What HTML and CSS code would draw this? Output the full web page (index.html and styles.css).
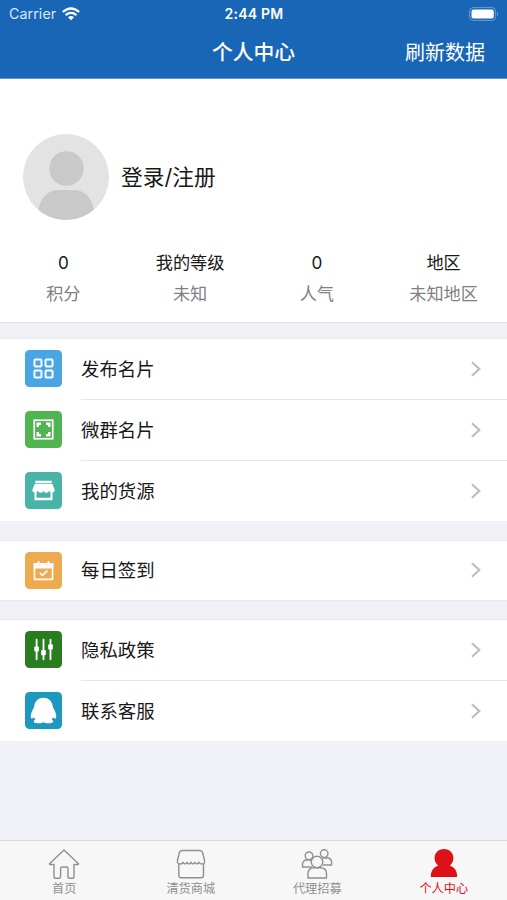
FILE: index.html
```html
<!DOCTYPE html>
<html lang="zh-CN">
<head>
<meta charset="utf-8">
<title>个人中心</title>
<link rel="stylesheet" href="styles.css">
</head>
<body>
<div class="screen">
  <header class="header">
    <div class="status">
      <div class="carrier"><span>Carrier</span>
        <svg width="18" height="14" viewBox="0 0 18 14" fill="none" stroke="#fff" stroke-width="2.3"><path d="M.8 5Q9-2 17.2 5M3.6 8.1Q9 3.7 14.4 8.1"/><path d="M6 10.2Q9 8 12 10.2L9 13.3Z" fill="#fff" stroke="none"/></svg>
      </div>
      <div class="time">2:44 PM</div>
      <div class="battery">
        <svg width="31" height="14" viewBox="0 0 31 14"><rect x=".6" y=".6" width="26" height="12.8" rx="3.6" fill="none" stroke="#6d9dd2"/><rect x="2.5" y="2.5" width="22.3" height="9" rx="2" fill="#fff"/><path d="M28 4.8Q30.3 7 28 9.2Z" fill="#6d9dd2"/></svg>
      </div>
    </div>
    <div class="navbar"><span></span><h1>个人中心</h1><span class="refresh">刷新数据</span></div>
  </header>
  <section class="profile">
    <div class="user">
      <svg class="avatar" width="86" height="86" viewBox="0 0 86 86"><defs><clipPath id="round"><circle cx="43" cy="43" r="43"/></clipPath></defs><g clip-path="url(#round)"><rect width="86" height="86" fill="#e3e3e3"/><circle cx="43.5" cy="34.5" r="17.3" fill="#c9c9c9"/><path d="M12 86L15.5 75Q20 56 36 56H51Q66 56 71 75L74 86Z" fill="#c9c9c9"/></g></svg>
      <span class="login">登录/注册</span>
    </div>
    <div class="stats">
      <div><b>0</b><span>积分</span></div>
      <div><b>我的等级</b><span>未知</span></div>
      <div><b>0</b><span>人气</span></div>
      <div><b>地区</b><span>未知地区</span></div>
    </div>
  </section>
  <section class="group first">
    <div class="row"><svg class="icon blue" viewBox="0 0 36 36"><g fill="none" stroke="#fff" stroke-width="1.9"><rect x="9.2" y="9.2" width="6.8" height="6.8" rx=".8"/><rect x="20" y="9.2" width="6.8" height="6.8" rx=".8"/><rect x="9.2" y="20" width="6.8" height="6.8" rx=".8"/><rect x="20" y="20" width="6.8" height="6.8" rx=".8"/></g></svg><div class="cell"><span>发布名片</span><svg class="chevron" viewBox="0 0 10 16"><path d="M1 1.2L8.3 8L1 14.8"/></svg></div></div>
    <div class="row"><svg class="icon green" viewBox="0 0 36 36"><rect x="9" y="9" width="18" height="18" fill="none" stroke="#fff" stroke-width="1.6"/><path d="M11.2 11.2H15.6V13.6H13.6V15.6H11.2ZM24.8 11.2H20.4V13.6H22.4V15.6H24.8ZM11.2 24.8H15.6V22.4H13.6V20.4H11.2ZM24.8 24.8H20.4V22.4H22.4V20.4H24.8Z" fill="#fff"/></svg><div class="cell"><span>微群名片</span><svg class="chevron" viewBox="0 0 10 16"><path d="M1 1.2L8.3 8L1 14.8"/></svg></div></div>
    <div class="row"><svg class="icon teal" viewBox="0 0 36 36"><path d="M10 8.5H26V10.7H10ZM9.5 11.5H26.5L28.8 17A2.6 2.6 0 0 1 23.4 17.5A2.7 2.7 0 0 1 18 17.5A2.7 2.7 0 0 1 12.6 17.5A2.6 2.6 0 0 1 7.2 17Z" fill="#fff"/><path d="M10.2 19V26.6H25.8V19M10.2 26H25.8" fill="none" stroke="#fff" stroke-width="2"/></svg><div class="cell"><span>我的货源</span><svg class="chevron" viewBox="0 0 10 16"><path d="M1 1.2L8.3 8L1 14.8"/></svg></div></div>
  </section>
  <section class="group single">
    <div class="row"><svg class="icon orange" viewBox="0 0 36 36"><path d="M9.2 11.5H26.8V26.6H9.2Z" fill="none" stroke="#fff" stroke-width="1.6" stroke-linejoin="round"/><path d="M8.5 10.8H11.8L13.2 13H14.8L16 11.2H20L21.2 13H22.8L24.2 10.8H27.5V16H8.5Z" fill="#fff"/><path d="M13.2 8.8V11.8M22.8 8.8V11.8M14.4 20.4L17 22.8L21.8 18.2" fill="none" stroke="#fff" stroke-width="1.6"/></svg><div class="cell"><span>每日签到</span><svg class="chevron" viewBox="0 0 10 16"><path d="M1 1.2L8.3 8L1 14.8"/></svg></div></div>
  </section>
  <section class="group last">
    <div class="row"><svg class="icon forest" viewBox="0 0 36 36"><path d="M11.3 8.5V27.5M18 8.5V27.5M24.8 8.5V27.5" stroke="#fff" stroke-width="1.8" stroke-linecap="round"/><g fill="#fff"><rect x="9" y="15" width="4.6" height="5" rx="1"/><rect x="15.7" y="18.5" width="4.6" height="5" rx="1"/><rect x="22.5" y="13" width="4.6" height="5" rx="1"/></g></svg><div class="cell"><span>隐私政策</span><svg class="chevron" viewBox="0 0 10 16"><path d="M1 1.2L8.3 8L1 14.8"/></svg></div></div>
    <div class="row"><svg class="icon cyan" viewBox="0 0 36 36"><path d="M18 5.5C12.2 5.5 9 9.8 8.8 15.2C6.6 18.5 5.2 22 5.7 25C6.2 26.4 7.6 25.8 8.8 24.8L10 26.8C8 27.8 8 29.8 10.5 30.2C13 30.7 16.2 30.4 17.2 29.6H18.8C19.8 30.4 23 30.7 25.5 30.2C28 29.8 28 27.8 26 26.8L27.2 24.8C28.4 25.8 29.8 26.4 30.3 25C30.8 22 29.4 18.5 27.2 15.2C27 9.8 23.8 5.5 18 5.5Z" fill="#fff"/></svg><div class="cell"><span>联系客服</span><svg class="chevron" viewBox="0 0 10 16"><path d="M1 1.2L8.3 8L1 14.8"/></svg></div></div>
  </section>
  <nav class="tabs">
    <div class="tab"><svg viewBox="0 0 32 32"><path d="M16 2L30.2 15.5Q31 16.5 29.5 16.5H26V28.5Q26 30.3 24.2 30.3H21.5Q20 30.3 20 28.5V20.5Q20 19 18.5 19H14Q12.6 19 12.6 20.5V28.5Q12.6 30.3 11 30.3H8Q6 30.3 6 28.5V16.5H2.5Q1 16.5 1.8 15.5Z"/></svg><span>首页</span></div>
    <div class="tab"><svg viewBox="0 0 32 32"><path d="M7 2.5H25Q27 2.5 27.6 4.5L29.6 12.5Q30 16 27 16Q24.5 16 23.7 14.3Q22 17.5 19.8 14.3Q17.8 17.5 16 14.3Q14 17.5 12 14.3Q10 17.5 8.2 14.3Q7.3 16 5 16Q2 16 2.4 12.5L4.4 4.5Q5 2.5 7 2.5ZM3.8 16V27.5Q3.8 29.8 6 29.8H26.3Q28.5 29.8 28.5 27.5V15.5"/></svg><span>清货商城</span></div>
    <div class="tab"><svg viewBox="0 0 32 32"><circle cx="16" cy="14" r="5.8"/><path d="M7 30V26Q7 19.8 13 19.8H19.5Q25.5 19.8 25.5 26V30Z"/><circle cx="8" cy="7.8" r="3.8"/><circle cx="23.2" cy="5.6" r="3.8"/><path d="M11 19H1.5V16.5Q1.5 12 6 12H10M21.5 10H26Q30.6 10 30.6 14.5V17H22"/></svg><span>代理招募</span></div>
    <div class="tab active"><svg viewBox="0 0 32 32"><path d="M16 1C10.2 1 6.6 5 6.6 10C6.6 13.5 8.2 16.1 10.3 17.7C6 19 2.8 22 2.8 29H29.2C29.2 22 26 19 21.7 17.7C23.8 16.1 25.4 13.5 25.4 10C25.4 5 21.8 1 16 1Z"/></svg><span>个人中心</span></div>
  </nav>
</div>
</body>
</html>
```
FILE: styles.css
```css
* { box-sizing: border-box; }
body { margin: 0; font-family: Inter, "Noto Sans CJK SC", sans-serif; color: #181818; }
.screen { width: 507px; height: 900px; display: flex; flex-direction: column; background: #f0f1f6; overflow: hidden; }
.header { height: 79px; flex: none; background: #1966b7; color: #fff; border-bottom: 1px solid #5c9ad8; }
.status { height: 27px; padding: 0 7px 0 9px; display: grid; grid-template-columns: 1fr auto 1fr; align-items: center; }
.carrier { display: flex; align-items: center; gap: 6px; font-size: 14.2px; color: #dce9f7; letter-spacing: .1px; }
.time { margin-right: 1px; font-size: 14px; font-weight: 600; letter-spacing: .25px; }
.battery { justify-self: end; display: flex; }
.navbar { height: 51px; padding-right: 22px; display: grid; grid-template-columns: 1fr auto 1fr; align-items: center; }
.navbar h1 { margin: 0 0 0 22px; font-size: 20.8px; line-height: 30px; font-weight: 500; }
.refresh { justify-self: end; margin-top: 1px; font-size: 20px; line-height: 30px; }
.profile { height: 244px; flex: none; padding-top: 55px; background: #fff; border-bottom: 1px solid #e3e4e6; }
.user { height: 86px; padding-left: 23px; display: flex; align-items: center; gap: 12px; }
.login { font-size: 21.7px; line-height: 30px; }
.stats { margin-top: 28px; display: grid; grid-template-columns: repeat(4, 1fr); text-align: center; font-size: 17.2px; line-height: 30px; }
.stats b, .stats span { display: block; }
.stats b { font-weight: 400; }
.stats span { margin-top: 1px; color: #818181; }
.group { flex: none; background: #fff; border-top: 1px solid #e9eaee; border-bottom: 1px solid #e9eaee; }
.first { margin-top: 15px; }
.single { margin-top: 19px; }
.last { margin-top: 18px; }
.first, .last { border-bottom: 0; }
.row { height: 61px; display: flex; align-items: center; padding-left: 25px; gap: 19px; }
.group .row:last-child { height: 60px; }
.single .row:last-child { height: 59px; }
.icon { width: 37px; height: 37px; margin-bottom: 2px; border-radius: 4.5px; flex: none; }
.row:last-child .icon { margin-bottom: 1px; }
.blue { background: #4aa5e4; }
.green { background: #50b551; }
.teal { background: #48b4a7; }
.orange { background: #edaa4e; }
.forest { background: #297d20; }
.cyan { background: #1d99bf; }
.cell { flex: 1; height: 100%; display: flex; align-items: center; justify-content: space-between; padding: 0 26px 1px 0; border-bottom: 1px solid #e5e5e5; font-size: 18.4px; line-height: 26px; }
.row:last-child .cell { border-bottom: 0; }
.chevron { width: 10px; height: 16px; fill: none; stroke: #bebebe; stroke-width: 2.2; }
.tabs { margin-top: auto; height: 60px; flex: none; padding-left: 1px; display: grid; grid-template-columns: repeat(4, 1fr); background: #f7f7f7; border-top: 1px solid #d8d9dc; }
.tab { display: flex; flex-direction: column; align-items: center; padding-top: 7px; color: #909090; font-size: 12.2px; line-height: 18px; }
.tab svg { width: 32px; height: 32px; fill: none; stroke: currentColor; stroke-width: 1.4; stroke-linejoin: round; flex: none; }
.active { color: #dd1117; }
.active svg { fill: currentColor; stroke: none; }
```
